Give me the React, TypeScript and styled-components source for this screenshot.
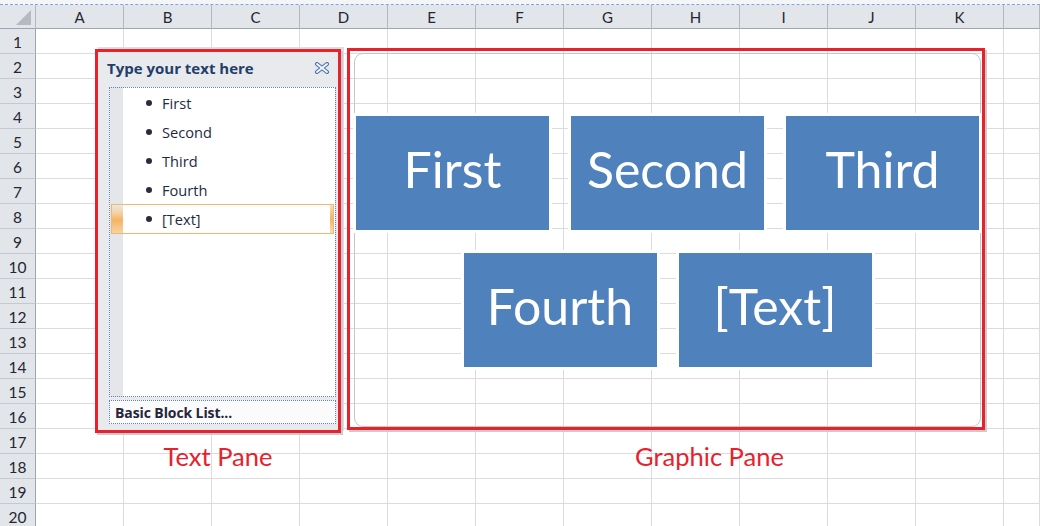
import React from 'react';
import styled, { createGlobalStyle } from 'styled-components';

const GlobalStyle = createGlobalStyle`
  html, body {
    margin: 0;
    padding: 0;
    background: #ffffff;
  }
  * {
    box-sizing: border-box;
  }
`;

const COLUMNS = ['A', 'B', 'C', 'D', 'E', 'F', 'G', 'H', 'I', 'J', 'K', ''];
const ROWS = Array.from({ length: 20 }, (_, i) => i + 1);
const ITEMS = ['First', 'Second', 'Third', 'Fourth', '[Text]'];
const BLOCKS = [['First', 'Second', 'Third'], ['Fourth', '[Text]']];

const Sheet = styled.div`
  position: relative;
  width: 1040px;
  height: 526px;
  overflow: hidden;
  font-family: Lato, 'Liberation Sans', sans-serif;
`;

const TopStrip = styled.div`
  height: 5px;
  background: #f3f5f8;
  border-bottom: 1px dashed #7ea5de;
`;

const Grid = styled.div`
  display: grid;
  grid-template-columns: 36px repeat(11, 88px) 1fr;
  grid-template-rows: 24px;
  grid-auto-rows: 25px;
`;

const HeaderCell = styled.div`
  display: flex;
  align-items: center;
  justify-content: center;
  background: #e2e5e9;
  border-right: 1px solid #b3b9c1;
  border-bottom: 1px solid #9ea5ae;
  font-size: 15px;
  color: #262633;
`;

const Corner = styled(HeaderCell)`
  justify-content: flex-end;
  align-items: flex-end;
  padding: 0 4px 3px 0;
`;

const CornerMark = styled.div`
  width: 15px;
  height: 15px;
  background: #b6bac0;
  clip-path: polygon(100% 0, 100% 100%, 0 100%);
`;

const RowHeader = styled(HeaderCell)`
  border-right-color: #9ea5ae;
  border-bottom-color: #c4c9cf;
  padding-top: 1px;
  font-size: 15.5px;
`;

const Cell = styled.div`
  border-right: 1px solid #dadcdd;
  border-bottom: 1px solid #dadcdd;
`;

const SmartArt = styled.div`
  position: absolute;
  left: 95px;
  top: 48px;
  display: flex;
  flex-direction: column;
`;

const PaneRow = styled.div`
  display: flex;
  gap: 6px;
  align-items: flex-start;
`;

const TextPane = styled.div`
  display: flex;
  flex-direction: column;
  width: 246px;
  height: 384px;
  margin-top: 1px;
  padding: 0 2px 6px 9px;
  border: 3px solid #e8212b;
  background: #e8eaed;
  box-shadow: 2px 2px 0 #c9cdd3, 3px -2px 0 #dcdfe3;
`;

const TitleRow = styled.div`
  display: flex;
  align-items: center;
  justify-content: space-between;
  height: 35px;
  padding: 0 6px 4px 0;
`;

const Title = styled.span`
  font-family: 'Open Sans', 'DejaVu Sans', sans-serif;
  font-weight: 700;
  font-size: 15px;
  color: #233e6a;
`;

const ListBox = styled.div`
  flex: 1;
  margin-left: 2px;
  border: 1px dotted #5f83bf;
  background: linear-gradient(to right, #e4e6e9 13px, #ffffff 13px);
  display: flex;
  flex-direction: column;
`;

const Item = styled.div<{ $selected?: boolean }>`
  display: flex;
  align-items: center;
  height: ${(p) => (p.$selected ? 30 : 29)}px;
  padding-left: ${(p) => (p.$selected ? 34 : 36)}px;
  margin: ${(p) => (p.$selected ? '0 1px 0 1px' : '0')};
  border: ${(p) => (p.$selected ? '1px solid #f1b76c' : 'none')};
  background: ${(p) =>
    p.$selected
      ? `linear-gradient(#e8e8e8, #f6cf9c 30%, #f3b466 55%, #f7d3a3) left / 11px 100% no-repeat,
         linear-gradient(#f8dcb5, #f3b466, #f8dcb5) right / 3px 100% no-repeat,
         #ffffff`
      : 'transparent'};
  font-family: 'Open Sans', 'DejaVu Sans', sans-serif;
  font-size: 14.6px;
  color: #1f2a44;
`;

const Bullet = styled.span`
  width: 6px;
  height: 6px;
  border-radius: 50%;
  background: #2b2b3f;
  margin-right: 10px;
`;

const Footer = styled.div`
  display: flex;
  align-items: center;
  height: 24px;
  margin: 3px 0 0 2px;
  padding-left: 5px;
  border: 1px dotted #5f83bf;
  background: #fbfbfc;
  font-family: 'Open Sans', 'DejaVu Sans', sans-serif;
  font-weight: 700;
  font-size: 14px;
  letter-spacing: -0.1px;
  color: #26263a;
`;

const GraphicPane = styled.div`
  display: flex;
  width: 638px;
  height: 382px;
  padding: 2px 1px 0 4px;
  border: 3px solid #e8212b;
  box-shadow: 2px 2px 0 #c9cdd3;
`;

const Frame = styled.div`
  flex: 1;
  display: flex;
  flex-direction: column;
  justify-content: center;
  align-items: center;
  gap: 23px;
  padding-top: 2px;
  border: 1px solid #c3c7cc;
  border-radius: 9px;
`;

const BlockRow = styled.div`
  display: flex;
  gap: 22px;
`;

const Block = styled.div`
  display: flex;
  align-items: center;
  justify-content: center;
  width: 193px;
  height: 114px;
  background: #4f81bd;
  box-shadow: 0 0 0 3px #ffffff;
  color: #ffffff;
  font-family: Lato, 'Open Sans', sans-serif;
  font-size: 50px;
  padding-bottom: 7px;
`;

const LabelRow = styled.div`
  display: flex;
  gap: 6px;
  margin-top: 8px;
`;

const PaneLabel = styled.div<{ $width: number; $shift?: number }>`
  width: ${(p) => p.$width}px;
  padding-left: ${(p) => p.$shift ?? 0}px;
  text-align: center;
  font-family: Lato, 'Open Sans', sans-serif;
  font-size: 25.5px;
  line-height: 30px;
  color: #e8212b;
`;

function CloseIcon(): JSX.Element {
  return (
    <svg width="16" height="12" viewBox="0 0 16 12">
      <rect x="0.5" y="0.5" width="15" height="11" rx="1.5" fill="#dfe6f0" />
      <path d="M3 2 L13 10 M13 2 L3 10" stroke="#4a6fa8" strokeWidth="4" strokeLinecap="round" />
      <path d="M3 2 L13 10 M13 2 L3 10" stroke="#f4f7fb" strokeWidth="2" strokeLinecap="round" />
    </svg>
  );
}

export default function App(): JSX.Element {
  return (
    <Sheet>
      <GlobalStyle />
      <TopStrip />
      <Grid>
        <Corner>
          <CornerMark />
        </Corner>
        {COLUMNS.map((c, i) => (
          <HeaderCell key={`h${i}`}>{c}</HeaderCell>
        ))}
        {ROWS.map((r) => (
          <React.Fragment key={r}>
            <RowHeader>{r}</RowHeader>
            {COLUMNS.map((c, i) => (
              <Cell key={`${r}-${i}`} />
            ))}
          </React.Fragment>
        ))}
      </Grid>

      <SmartArt>
        <PaneRow>
          <TextPane>
            <TitleRow>
              <Title>Type your text here</Title>
              <CloseIcon />
            </TitleRow>
            <ListBox>
              {ITEMS.map((t, i) => (
                <Item key={t} $selected={i === ITEMS.length - 1}>
                  <Bullet />
                  {t}
                </Item>
              ))}
            </ListBox>
            <Footer>Basic Block List...</Footer>
          </TextPane>
          <GraphicPane>
            <Frame>
              {BLOCKS.map((row, i) => (
                <BlockRow key={i}>
                  {row.map((b) => (
                    <Block key={b}>{b}</Block>
                  ))}
                </BlockRow>
              ))}
            </Frame>
          </GraphicPane>
        </PaneRow>
        <LabelRow>
          <PaneLabel $width={246}>Text Pane</PaneLabel>
          <PaneLabel $width={638} $shift={87}>
            Graphic Pane
          </PaneLabel>
        </LabelRow>
      </SmartArt>
    </Sheet>
  );
}
